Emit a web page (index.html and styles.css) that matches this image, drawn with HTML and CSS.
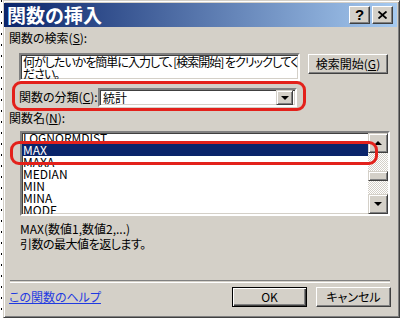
FILE: index.html
```
<!DOCTYPE html>
<html lang="ja">
<head>
    <meta charset="UTF-8">
    <title>関数の挿入</title>
    <link rel="stylesheet" href="styles.css">
</head>
<body>

<div class="desktop">
    <div class="sheet-edge"></div>

    <div class="dialog">
        <!-- Title bar -->
        <div class="titlebar">
            <span class="title">関数の挿入</span>
            <div class="caption-btns">
                <span class="cap-btn help">?</span>
                <span class="cap-btn close">
                    <svg width="9" height="8" viewBox="0 0 9 8"><path d="M0.5 0.5 L8.5 7.5 M8.5 0.5 L0.5 7.5" stroke="#000" stroke-width="1.8" fill="none"/></svg>
                </span>
            </div>
        </div>

        <div class="content">
            <div class="label">関数の検索(<u>S</u>):</div>

            <div class="search-row">
                <div class="textbox">何がしたいかを簡単に入力して、[検索開始] をクリックしてく
ださい。</div>
                <button type="button" class="btn search-btn">検索開始(<u>G</u>)</button>
            </div>

            <div class="category-row">
                <span class="label cat-label">関数の分類(<u>C</u>):</span>
                <div class="select">
                    <span class="select-value">統計</span>
                    <span class="drop-btn"><i class="arrow-down"></i></span>
                </div>
            </div>

            <div class="label">関数名(<u>N</u>):</div>

            <div class="listbox">
                <ul class="items">
                    <li>LOGNORMDIST</li>
                    <li class="selected">MAX</li>
                    <li>MAXA</li>
                    <li>MEDIAN</li>
                    <li>MIN</li>
                    <li>MINA</li>
                    <li>MODE</li>
                </ul>
                <div class="scrollbar">
                    <span class="sb-btn"><i class="arrow-up"></i></span>
                    <div class="sb-track"><span class="sb-thumb"></span></div>
                    <span class="sb-btn"><i class="arrow-down"></i></span>
                </div>
            </div>

            <div class="desc">
                <div>MAX(数値1,数値2,...)</div>
                <div class="desc-text">引数の最大値を返します。</div>
            </div>

            <div class="separator"></div>

            <div class="footer">
                <a class="help-link" href="#">この関数のヘルプ</a>
                <div class="footer-btns">
                    <button type="button" class="btn default">OK</button>
                    <button type="button" class="btn">キャンセル</button>
                </div>
            </div>

            <!-- red annotation marks -->
            <div class="mark mark-category"></div>
            <div class="mark mark-max"></div>
        </div>
    </div>
</div>

</body>
</html>
```

FILE: styles.css
```
/* Classic Windows dialog */
body {
    margin: 0;
    padding: 0;
    font-family: "Noto Sans CJK JP", sans-serif;
    font-size: 12px;
    color: #000;
    background: #fff;
}

.desktop {
    display: flex;
    width: 400px;
    height: 318px;
    overflow: hidden;
}

.sheet-edge {
    width: 1px;
    margin: 0 1px 0 1px;
    background: repeating-linear-gradient(to bottom, #000 0 2px, transparent 2px 11px);
}

.dialog {
    width: 397px;
    height: 318px;
    box-sizing: border-box;
    border: 1px solid;
    border-color: #d4d0c8 #404040 #404040 #d4d0c8;
    box-shadow: inset 1px 1px #fff, inset -1px -1px #808080;
    padding: 2px 2px 2px 0;
    background: #d4d0c8;
    display: flex;
    flex-direction: column;
}

.titlebar {
    height: 24px;
    flex: none;
    display: flex;
    align-items: center;
    justify-content: space-between;
    background: linear-gradient(to right, #0a246a, #a6caf0);
    padding: 0 4px 0 3px;
}

.title {
    color: #fff;
    font-size: 19px;
    font-weight: bold;
    line-height: 24px;
}

.caption-btns {
    display: flex;
    gap: 2px;
}

.cap-btn {
    width: 21px;
    height: 18px;
    box-sizing: border-box;
    background: #d4d0c8;
    border: 1px solid;
    border-color: #fff #404040 #404040 #fff;
    box-shadow: inset -1px -1px #808080;
    display: flex;
    align-items: center;
    justify-content: center;
}

.cap-btn.help {
    font-family: "Liberation Sans", sans-serif;
    font-weight: bold;
    font-size: 15px;
    line-height: 16px;
}

.content {
    position: relative;
    flex: 1;
    padding-left: 5px;
    font-feature-settings: "palt";
}

.label {
    margin-top: 4px;
    line-height: 14px;
    height: 14px;
}

.search-row {
    display: flex;
    align-items: flex-start;
    margin: 8px 0 0 10px;
}

/* sunken field */
.textbox, .select, .listbox {
    box-sizing: border-box;
    border: 2px solid;
    border-color: #808080 #fff #fff #808080;
    box-shadow: inset 1px 1px #404040, inset -1px -1px #d4d0c8;
    background: #fff;
}

.textbox {
    width: 281px;
    height: 28px;
    padding: 1px 0 0 2px;
    line-height: 12px;
    letter-spacing: -1px;
    white-space: pre;
    overflow: hidden;
}

.btn {
    box-sizing: border-box;
    height: 20px;
    padding: 0;
    font-family: inherit;
    font-size: 12px;
    font-feature-settings: "palt";
    color: #000;
    background: #d4d0c8;
    border: 1px solid;
    border-color: #fff #404040 #404040 #fff;
    box-shadow: inset -1px -1px #808080;
    line-height: 16px;
}

.search-btn {
    width: 80px;
    margin: 1px 0 0 8px;
}

.category-row {
    display: flex;
    align-items: flex-start;
    margin: 7px 0 0 10px;
}

.cat-label {
    width: 79px;
    margin-top: 2px;
}

.select {
    width: 199px;
    height: 19px;
    display: flex;
    align-items: center;
    justify-content: space-between;
    padding: 2px;
}

.select-value {
    line-height: 14px;
    padding-left: 1px;
}

.drop-btn, .sb-btn {
    box-sizing: border-box;
    background: #d4d0c8;
    border: 1px solid;
    border-color: #d4d0c8 #404040 #404040 #d4d0c8;
    box-shadow: inset 1px 1px #fff, inset -1px -1px #808080;
    display: flex;
    align-items: center;
    justify-content: center;
}

.drop-btn {
    width: 17px;
    height: 15px;
}

.arrow-down {
    display: block;
    width: 0;
    height: 0;
    border-left: 4px solid transparent;
    border-right: 4px solid transparent;
    border-top: 4px solid #000;
}

.arrow-up {
    display: block;
    width: 0;
    height: 0;
    border-left: 4px solid transparent;
    border-right: 4px solid transparent;
    border-bottom: 4px solid #000;
}

.listbox {
    margin: 6px 0 0 11px;
    width: 370px;
    height: 85px;
    display: flex;
    overflow: hidden;
}

.items {
    flex: 1;
    list-style: none;
    margin: -1px 0 0 0;
    padding: 0;
    overflow: hidden;
}

.items li {
    height: 12px;
    line-height: 12px;
    padding-left: 1px;
}

.items li.selected {
    background: #0a246a;
    color: #fff;
}

.scrollbar {
    width: 20px;
    display: flex;
    flex-direction: column;
}

.sb-btn {
    width: 20px;
    height: 20px;
    flex: none;
}

.sb-track {
    flex: 1;
    background: repeating-conic-gradient(#d4d0c8 0 25%, #fff 0 50%) 0 0 / 2px 2px;
    padding-top: 18px;
}

.sb-thumb {
    display: block;
    height: 10px;
    box-sizing: border-box;
    background: #d4d0c8;
    border: 1px solid;
    border-color: #d4d0c8 #404040 #404040 #d4d0c8;
    box-shadow: inset 1px 1px #fff, inset -1px -1px #808080;
}

.desc {
    margin: 5px 0 0 11px;
    line-height: 15px;
}

.desc-text {
    letter-spacing: -0.5px;
}

.separator {
    margin: 29px 0 0 1px;
    width: 380px;
    height: 1px;
    border-top: 1px solid #808080;
    border-bottom: 1px solid #fff;
}

.footer {
    display: flex;
    align-items: center;
    justify-content: space-between;
    width: 382px;
    margin-top: 4px;
}

.help-link {
    color: #1f3ae0;
    text-decoration: underline;
    line-height: 14px;
}

.footer-btns {
    display: flex;
    gap: 9px;
}

.footer-btns .btn {
    width: 75px;
}

.btn.default {
    border: 1px solid #000;
    box-shadow: inset 1px 1px #fff, inset -1px -1px #404040, inset -2px -2px #808080;
}

/* red annotation overlays */
.mark {
    position: absolute;
    border: 3px solid #e3211b;
    border-radius: 9px;
    box-sizing: border-box;
}

.mark-category {
    left: 8px;
    top: 54px;
    width: 294px;
    height: 30px;
}

.mark-max {
    left: 6px;
    top: 114px;
    width: 368px;
    height: 24px;
}
```
